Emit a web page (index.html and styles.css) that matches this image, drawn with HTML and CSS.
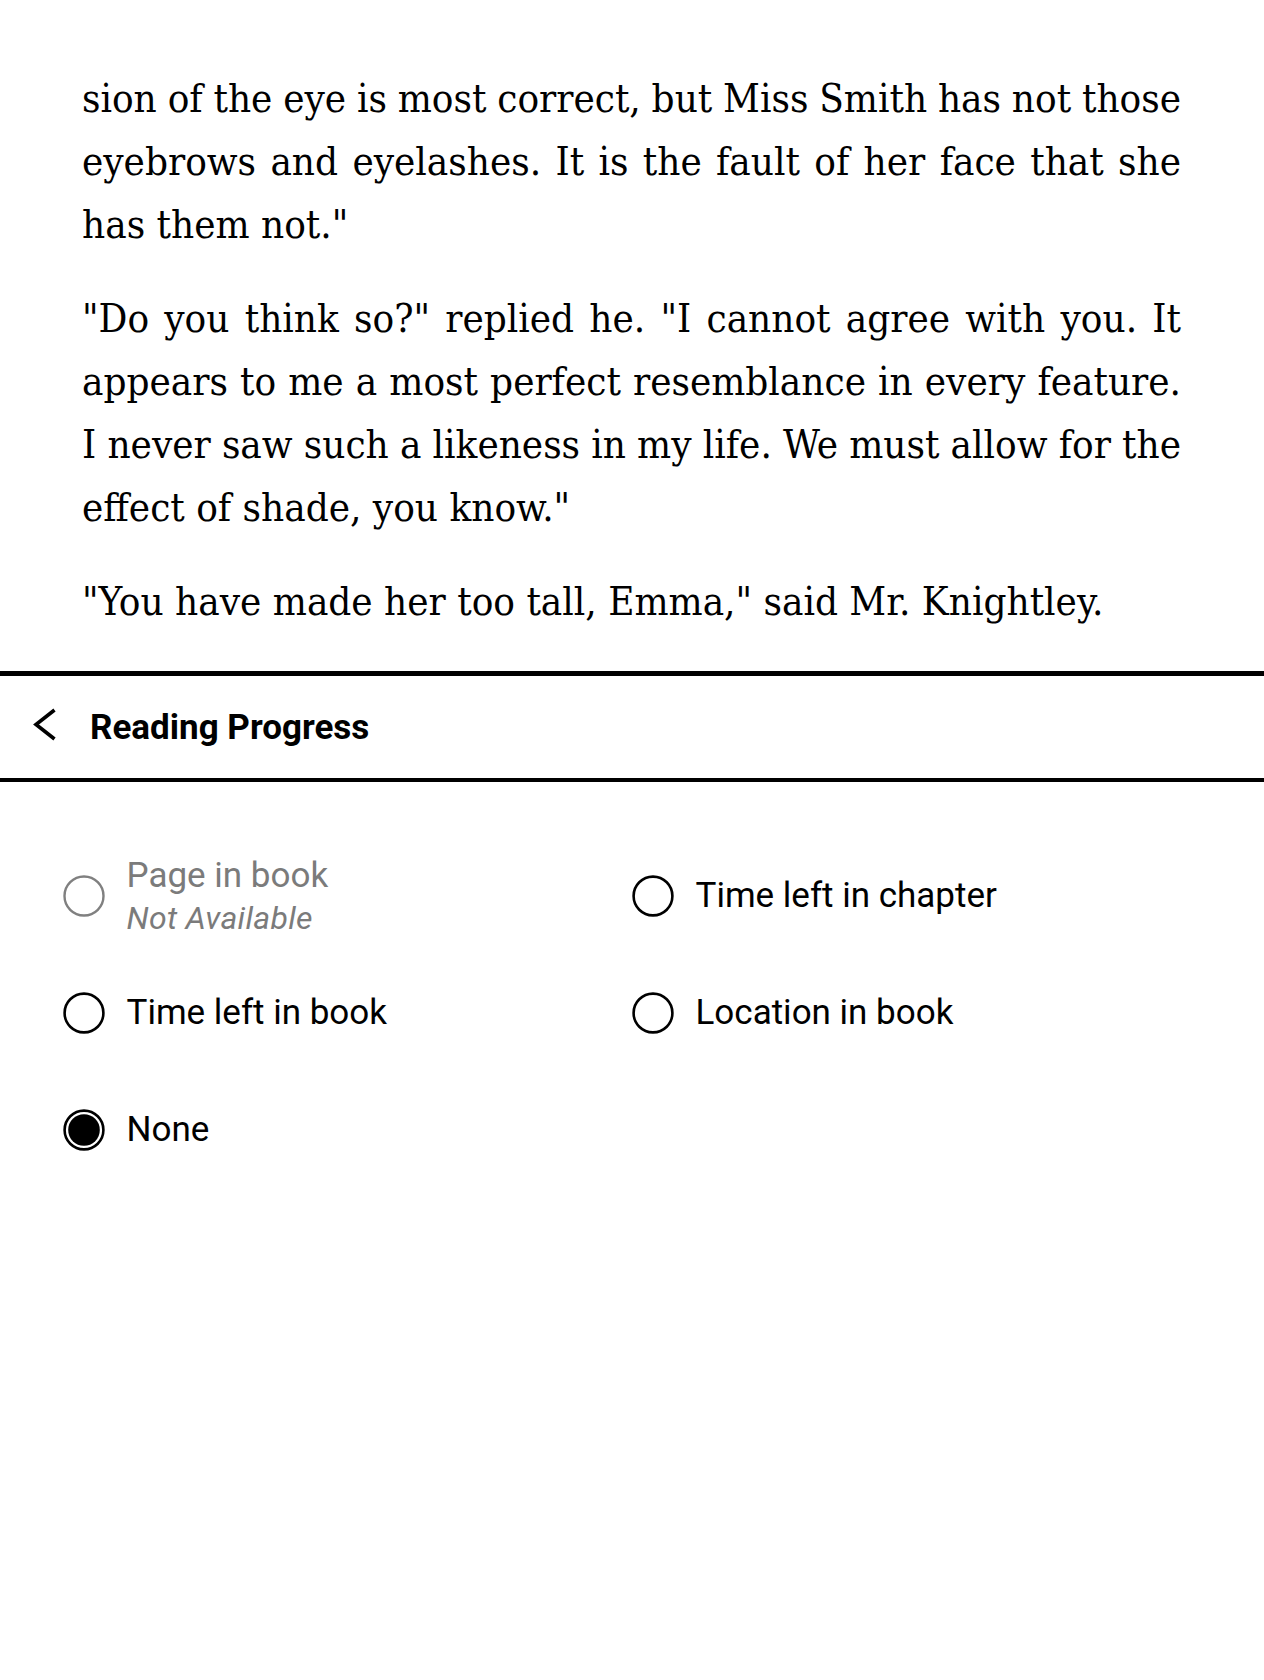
FILE: index.html
```html
<!DOCTYPE html>
<html lang="en">
<head>
<meta charset="utf-8">
<title>Reading Progress</title>
<link rel="stylesheet" href="styles.css">
</head>
<body>
<main class="page">
  <section class="book">
    <p class="para">
      <span class="ln">sion of the eye is most correct, but Miss Smith has not those</span>
      <span class="ln">eyebrows and eyelashes. It is the fault of her face that she</span>
      <span class="ln ln-end">has them not."</span>
    </p>
    <p class="para">
      <span class="ln">"Do you think so?" replied he. "I cannot agree with you. It</span>
      <span class="ln">appears to me a most perfect resemblance in every feature.</span>
      <span class="ln">I never saw such a likeness in my life. We must allow for the</span>
      <span class="ln ln-end">effect of shade, you know."</span>
    </p>
    <p class="para">
      <span class="ln ln-end">"You have made her too tall, Emma," said Mr. Knightley.</span>
    </p>
  </section>

  <section class="panel">
    <header class="panel-head">
      <svg class="back" width="24" height="34" viewBox="0 0 24 34" aria-hidden="true">
        <polyline points="21.5,2 3,16.5 21.5,31" fill="none" stroke="#000" stroke-width="3.6" stroke-linecap="butt" stroke-linejoin="miter"/>
      </svg>
      <h1 class="panel-title">Reading Progress</h1>
    </header>

    <div class="options">
      <div class="opt opt-disabled">
        <svg class="radio" width="42" height="42" viewBox="0 0 42 42" aria-hidden="true">
          <circle cx="21" cy="21" r="19.5" fill="none" stroke="#808080" stroke-width="2.4"/>
        </svg>
        <div class="opt-label">
          <span class="opt-main">Page in book</span>
          <span class="opt-sub">Not Available</span>
        </div>
      </div>
      <div class="opt">
        <svg class="radio" width="42" height="42" viewBox="0 0 42 42" aria-hidden="true">
          <circle cx="21" cy="21" r="19.4" fill="none" stroke="#000" stroke-width="2.6"/>
        </svg>
        <div class="opt-label"><span class="opt-main">Time left in chapter</span></div>
      </div>
      <div class="opt">
        <svg class="radio" width="42" height="42" viewBox="0 0 42 42" aria-hidden="true">
          <circle cx="21" cy="21" r="19.4" fill="none" stroke="#000" stroke-width="2.6"/>
        </svg>
        <div class="opt-label"><span class="opt-main">Time left in book</span></div>
      </div>
      <div class="opt">
        <svg class="radio" width="42" height="42" viewBox="0 0 42 42" aria-hidden="true">
          <circle cx="21" cy="21" r="19.4" fill="none" stroke="#000" stroke-width="2.6"/>
        </svg>
        <div class="opt-label"><span class="opt-main">Location in book</span></div>
      </div>
      <div class="opt">
        <svg class="radio" width="42" height="42" viewBox="0 0 42 42" aria-hidden="true">
          <circle cx="21" cy="21" r="19.4" fill="none" stroke="#000" stroke-width="2.6"/>
          <circle cx="21" cy="21" r="15.8" fill="#000"/>
        </svg>
        <div class="opt-label"><span class="opt-main">None</span></div>
      </div>
    </div>
  </section>
</main>
</body>
</html>
```

FILE: styles.css
```css
* { box-sizing: border-box; }

html, body {
  margin: 0;
  padding: 0;
  background: #fff;
  color: #000;
}

.page {
  width: 1264px;
  min-height: 1680px;
  background: #fff;
}

.book {
  padding: 67px 83px 0 82px;
  font-family: "DejaVu Serif Condensed", "Liberation Serif", serif;
  font-size: 40px;
  line-height: 63px;
  color: #000;
}

.para {
  margin: 0 0 31px 0;
}

.para:last-child {
  margin-bottom: 0;
}

.ln {
  display: block;
  text-align: justify;
  text-align-last: justify;
  word-spacing: -8px;
}

.ln-end {
  text-align: left;
  text-align-last: left;
  word-spacing: normal;
}

.panel {
  margin-top: 38px;
  font-family: Roboto, "Noto Sans", sans-serif;
}

.panel-head {
  display: flex;
  align-items: center;
  height: 111px;
  border-top: 5px solid #000;
  border-bottom: 4px solid #000;
  padding-left: 33px;
}

.back {
  display: block;
  flex: none;
  margin-top: -4px;
}

.panel-title {
  margin: 0 0 0 33px;
  font-size: 35px;
  font-weight: 700;
  line-height: 41px;
  color: #000;
}

.options {
  display: grid;
  grid-template-columns: 569px 1fr;
  grid-auto-rows: 117px;
  padding: 55px 0 0 63px;
}

.opt {
  display: flex;
  align-items: center;
  gap: 22px;
}

.radio {
  display: block;
  flex: none;
  margin-left: -0.5px;
}

.opt-label {
  display: flex;
  flex-direction: column;
}

.opt-disabled .opt-label {
  margin-top: 5px;
}

.opt-main {
  font-size: 35px;
  line-height: 41px;
  color: #000;
}

.opt-disabled .opt-main {
  color: #7b7b7b;
  line-height: 40px;
}

.opt-sub {
  font-size: 32px;
  font-style: italic;
  line-height: 44px;
  letter-spacing: 0.3px;
  color: #7b7b7b;
}
```
